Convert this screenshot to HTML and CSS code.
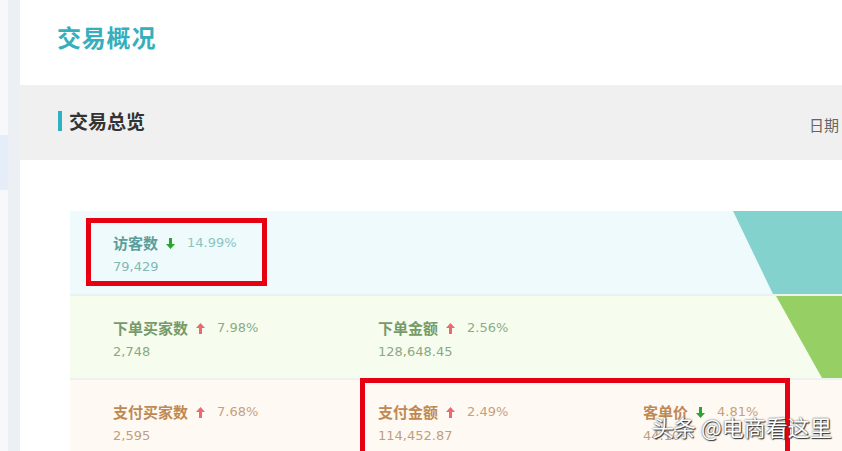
FILE: index.html
```html
<!DOCTYPE html>
<html lang="zh">
<head>
<meta charset="utf-8">
<title>交易概况</title>
<link rel="stylesheet" href="styles.css">
</head>
<body>
<div class="page">
  <aside class="side">
    <div class="side-item"></div>
    <div class="side-item active"></div>
  </aside>
  <div class="gutter"></div>
  <main class="main">
    <header class="head"><h1 class="title">交易概况</h1></header>
    <section class="band">
      <h2 class="band-title"><span class="mark"></span>交易总览</h2>
      <span class="date">日期</span>
    </section>
    <section class="funnel">
      <div class="row r1">
        <div class="stats">
          <div class="stat">
            <div class="line"><b class="lbl">访客数</b><svg class="arr" viewBox="0 0 9 11" width="9" height="11"><path d="M3 0h3v6h3L4.5 11 0 6h3z" fill="#2aa62e"/></svg><span class="pct">14.99%</span></div>
            <div class="val">79,429</div>
          </div>
        </div>
        <div class="shape s1"></div>
      </div>
      <div class="row r2">
        <div class="stats">
          <div class="stat">
            <div class="line"><b class="lbl">下单买家数</b><svg class="arr" viewBox="0 0 9 11" width="9" height="11"><path d="M3 11h3V5h3L4.5 0 0 5h3z" fill="#eb6a6e"/></svg><span class="pct">7.98%</span></div>
            <div class="val">2,748</div>
          </div>
          <div class="stat">
            <div class="line"><b class="lbl">下单金额</b><svg class="arr" viewBox="0 0 9 11" width="9" height="11"><path d="M3 11h3V5h3L4.5 0 0 5h3z" fill="#eb6a6e"/></svg><span class="pct">2.56%</span></div>
            <div class="val">128,648.45</div>
          </div>
        </div>
        <div class="shape s2"></div>
      </div>
      <div class="row r3">
        <div class="stats">
          <div class="stat">
            <div class="line"><b class="lbl">支付买家数</b><svg class="arr" viewBox="0 0 9 11" width="9" height="11"><path d="M3 11h3V5h3L4.5 0 0 5h3z" fill="#eb6a6e"/></svg><span class="pct">7.68%</span></div>
            <div class="val">2,595</div>
          </div>
          <div class="stat">
            <div class="line"><b class="lbl">支付金额</b><svg class="arr" viewBox="0 0 9 11" width="9" height="11"><path d="M3 11h3V5h3L4.5 0 0 5h3z" fill="#eb6a6e"/></svg><span class="pct">2.49%</span></div>
            <div class="val">114,452.87</div>
          </div>
          <div class="stat">
            <div class="line"><b class="lbl">客单价</b><svg class="arr" viewBox="0 0 9 11" width="9" height="11"><path d="M3 0h3v6h3L4.5 11 0 6h3z" fill="#2aa62e"/></svg><span class="pct">4.81%</span></div>
            <div class="val">44.10</div>
          </div>
        </div>
        <div class="shape s3"></div>
      </div>
      <div class="redbox b1"></div>
      <div class="redbox b2"></div>
    </section>
  </main>
</div>
<div class="watermark">头条 @电商看这里</div>
</body>
</html>
```
FILE: styles.css
```css
html, body {
  margin: 0;
  padding: 0;
  width: 842px;
  height: 451px;
  overflow: hidden;
  background: #ffffff;
  font-family: "Noto Sans CJK SC", "DejaVu Sans", sans-serif;
}
.page {
  display: flex;
  height: 451px;
}
.side {
  width: 8px;
  background: #f7f8fa;
  display: flex;
  flex-direction: column;
}
.side-item {
  height: 135px;
}
.side-item.active {
  height: 55px;
  background: #e5edf9;
}
.gutter {
  width: 12px;
  background: #eceff3;
}
.main {
  width: 822px;
  overflow: hidden;
  background: #ffffff;
}
.head {
  height: 85px;
  display: flex;
  align-items: center;
  padding-left: 37px;
}
.title {
  margin: 0;
  font-size: 24px;
  font-weight: 700;
  color: #36afbd;
  letter-spacing: 0.8px;
  padding-bottom: 13px;
}
.band {
  height: 75px;
  background: #f0f0f0;
  display: flex;
  align-items: center;
  justify-content: space-between;
  padding: 0 3px 0 38px;
}
.band-title {
  margin: 0;
  display: flex;
  align-items: center;
  font-size: 19px;
  font-weight: 700;
  color: #333333;
  padding-bottom: 4px;
}
.mark {
  width: 4px;
  height: 20px;
  background: #2fb2bf;
  margin-right: 7px;
}
.date {
  font-size: 15px;
  color: #666666;
  padding-top: 3px;
}
.funnel {
  position: relative;
  margin: 51px 0 0 50px;
  display: flex;
  flex-direction: column;
}
.row {
  display: flex;
  height: 83px;
}
.row + .row {
  border-top: 2px solid #ebf2ef;
  height: 82px;
}
.r1 { background: #eefafb; }
.r2 { background: #f6fdef; }
.r3 { background: #fefaf3; }
.stats {
  flex: 1;
  display: flex;
  padding: 21px 0 0 43px;
}
.stat {
  width: 265px;
  line-height: 22px;
}
.line {
  display: flex;
  align-items: center;
}
.lbl {
  font-size: 15px;
  font-weight: 700;
}
.arr {
  margin: 0 12px 0 8px;
}
.pct, .val {
  font-family: "DejaVu Sans", sans-serif;
  font-size: 13px;
}
.val { margin-top: 2px; }
.r1 .lbl { color: #5a9e9c; }
.r1 .pct { color: #8cc4c2; }
.r1 .val { color: #84b8b5; }
.r2 .lbl { color: #769a69; }
.r2 .pct { color: #8fab85; }
.r2 .val { color: #8ca883; }
.r3 .lbl { color: #c08953; }
.r3 .pct { color: #c9a07a; }
.r3 .val { color: #bf9f7e; }
.shape { flex: none; }
.s1 {
  width: 109px;
  background: #84d2ce;
  clip-path: polygon(0 0, 100% 0, 100% 100%, 40px 100%);
}
.s2 {
  width: 66px;
  background: #96cf63;
  clip-path: polygon(0 0, 100% 0, 100% 100%, 46px 100%);
}
.s3 {
  width: 19px;
  background: #f6a623;
  clip-path: polygon(0 0, 100% 0, 100% 40px);
}
.redbox {
  position: absolute;
  box-sizing: border-box;
  border: 5px solid #e60012;
}
.b1 {
  left: 16px;
  top: 7px;
  width: 181px;
  height: 68px;
}
.b2 {
  left: 290px;
  top: 167px;
  width: 430px;
  height: 110px;
}
.watermark {
  position: absolute;
  left: 652px;
  top: 410px;
  font-size: 22px;
  color: #ffffff;
  font-family: "Noto Sans CJK SC", sans-serif;
  text-shadow: 0 0 2px #333, 1px 1px 1px #333;
  white-space: nowrap;
}
```
